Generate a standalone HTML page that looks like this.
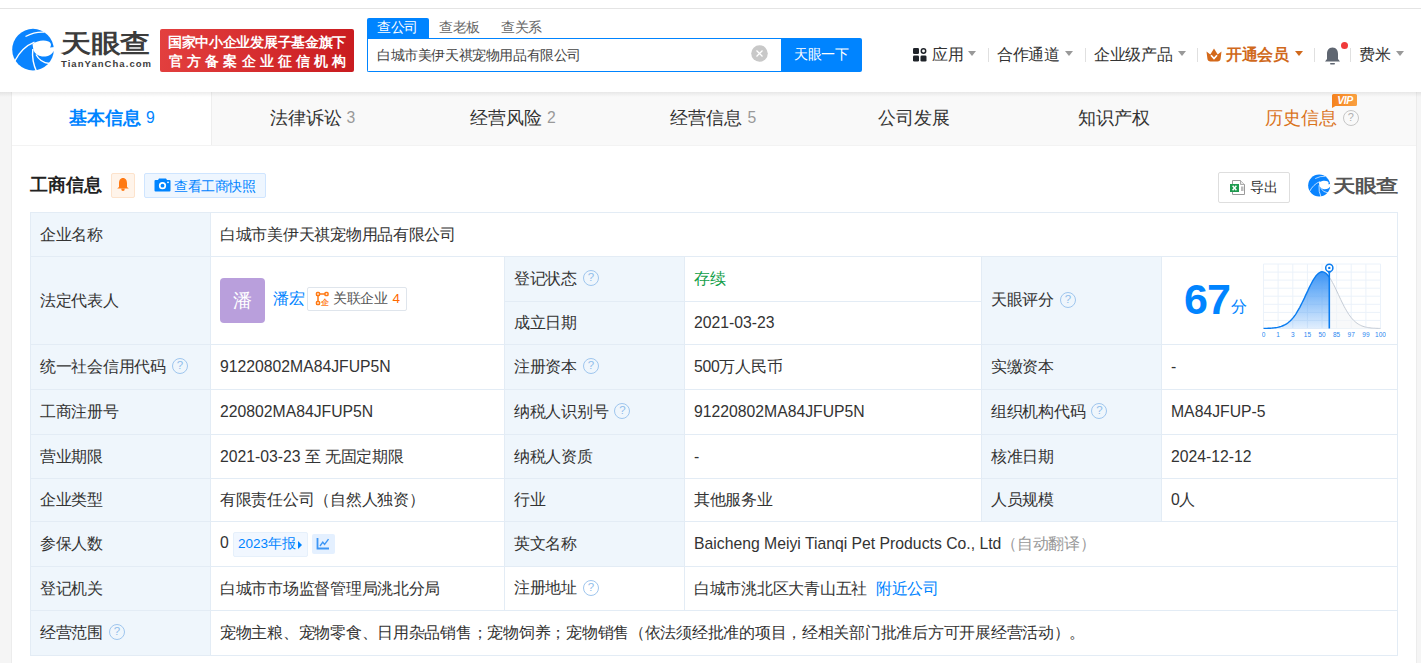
<!DOCTYPE html>
<html><head><meta charset="utf-8">
<style>
html,body{margin:0;padding:0;}
body{width:1421px;height:663px;overflow:hidden;background:#f5f5f5;font-family:"Liberation Sans", sans-serif;position:relative;}
.t{position:absolute;display:flex;align-items:center;white-space:nowrap;line-height:1;}
.qm{display:inline-block;box-sizing:border-box;width:16px;height:16px;border:1.4px solid #9fc6ee;border-radius:50%;margin-left:6px;position:relative;vertical-align:middle;top:-1px;letter-spacing:0}
.qm::after{content:"?";position:absolute;left:0;right:0;top:0;bottom:0;text-align:center;font-size:11.5px;line-height:13.5px;color:#8fbdeb;}
.lat{letter-spacing:0 !important}
</style></head><body>

<div style="position:absolute;left:0px;top:0px;width:1421px;height:8px;background:#fff;"></div>
<div style="position:absolute;left:0px;top:8px;width:1421px;height:1px;background:#e4e4e4;"></div>
<div style="position:absolute;left:0px;top:9px;width:1421px;height:83px;background:#fff;"></div>
<div style="position:absolute;left:0;top:92px;width:1421px;height:5px;background:linear-gradient(rgba(0,0,0,0.07),rgba(0,0,0,0));z-index:5"></div>
<svg style="position:absolute;left:10px;top:26px" width="48" height="48" viewBox="0 0 48 48"><circle cx="23" cy="23.6" r="20.8" fill="#0a84ff"/>
<path d="M22.5 18 C27 14.5 34 13.5 38.5 15.5 C41.5 17 41.5 19.5 40 21.5 L45 21 L45 23 C42 29.5 37 31 32 30.5 C28 30 25 27.5 23.5 24.5 Z" fill="#fff"/>
<path d="M15.5 10.5 Q25 5.5 34.5 6.2" stroke="#fff" stroke-width="1.3" fill="none"/>
<path d="M4.5 35.5 Q12 21 24.5 16.2" stroke="#fff" stroke-width="1.4" fill="none"/>
<path d="M22.8 23 Q21.5 35 26.8 46" stroke="#fff" stroke-width="1.4" fill="none"/>
<path d="M26 28.5 Q30 36.5 39.5 37.5" stroke="#fff" stroke-width="1.4" fill="none"/></svg>
<div class="t" style="left:61px;top:31px;height:30px;font-size:30px;color:#3c3c3c;letter-spacing:0px;font-weight:900;letter-spacing:-0.5px;transform:scaleY(0.83);transform-origin:0 0;"><span>天眼查</span></div>
<div class="t" style="left:61px;top:58px;height:12px;font-size:9.5px;color:#3c3c3c;letter-spacing:0px;font-weight:700;letter-spacing:1.05px;"><span>TianYanCha.com</span></div>
<div style="position:absolute;left:160px;top:29px;width:194px;height:43px;border-radius:2px;background:linear-gradient(100deg,#e3403f,#c91b1f);"></div>
<div class="t" style="left:168px;top:33.5px;height:18px;font-size:13.5px;color:#fff;letter-spacing:-0.4px;font-weight:700;letter-spacing:-0.31px;"><span>国家中小企业发展子基金旗下</span></div>
<div class="t" style="left:169px;top:53px;height:18px;font-size:13.5px;color:#fff;letter-spacing:-0.4px;font-weight:700;letter-spacing:4.15px;"><span>官方备案企业征信机构</span></div>
<div style="position:absolute;left:367px;top:18px;width:62px;height:20px;background:#0084ff;border-radius:2px 2px 0 0"></div>
<div class="t" style="left:377px;top:18px;height:20px;font-size:13.5px;color:#fff;letter-spacing:-0.4px;"><span>查公司</span></div>
<div class="t" style="left:439px;top:18px;height:20px;font-size:13.5px;color:#666;letter-spacing:-0.4px;"><span>查老板</span></div>
<div class="t" style="left:501px;top:18px;height:20px;font-size:13.5px;color:#666;letter-spacing:-0.4px;"><span>查关系</span></div>
<div style="position:absolute;left:367px;top:38px;width:414px;height:34px;box-sizing:border-box;border:1px solid #0084ff;border-right:none;border-radius:0 0 0 2px;background:#fff"></div>
<div class="t" style="left:377px;top:39px;height:34px;font-size:13.5px;color:#444;letter-spacing:-0.4px;"><span>白城市美伊天祺宠物用品有限公司</span></div>
<svg style="position:absolute;left:751px;top:45px" width="17" height="17" viewBox="0 0 17 17"><circle cx="8.5" cy="8.5" r="8.3" fill="#c8c8c8"/><path d="M5.5 5.5L11.5 11.5M11.5 5.5L5.5 11.5" stroke="#fff" stroke-width="1.3"/></svg>
<div style="position:absolute;left:781px;top:38px;width:81px;height:34px;background:#0084ff;border-radius:0 2px 2px 0"></div>
<div class="t" style="left:794px;top:38px;height:34px;font-size:13.5px;color:#fff;letter-spacing:-0.4px;"><span>天眼一下</span></div>
<svg style="position:absolute;left:913px;top:48px" width="14" height="14" viewBox="0 0 14 14">
<rect x="0" y="0" width="6" height="6" rx="1.3" fill="#1f2329"/><circle cx="10.5" cy="3" r="2.2" stroke="#1f2329" stroke-width="1.5" fill="none"/>
<rect x="0" y="7.5" width="6" height="6" rx="1.3" fill="#1f2329"/><rect x="7.5" y="7.5" width="6" height="6" rx="1.3" fill="#1f2329"/></svg>
<div class="t" style="left:932px;top:40px;height:30px;font-size:15.75px;color:#333;letter-spacing:-0.27px;"><span>应用</span></div>
<div style="position:absolute;left:968px;top:51px;width:0;height:0;border-left:4.5px solid transparent;border-right:4.5px solid transparent;border-top:5px solid #999"></div>
<div style="position:absolute;left:988px;top:48px;width:1px;height:14px;background:#e0e0e0;"></div>
<div class="t" style="left:997px;top:40px;height:30px;font-size:15.75px;color:#333;letter-spacing:-0.27px;"><span>合作通道</span></div>
<div style="position:absolute;left:1065px;top:51px;width:0;height:0;border-left:4.5px solid transparent;border-right:4.5px solid transparent;border-top:5px solid #999"></div>
<div style="position:absolute;left:1085px;top:48px;width:1px;height:14px;background:#e0e0e0;"></div>
<div class="t" style="left:1094px;top:40px;height:30px;font-size:15.75px;color:#333;letter-spacing:-0.27px;"><span>企业级产品</span></div>
<div style="position:absolute;left:1178px;top:51px;width:0;height:0;border-left:4.5px solid transparent;border-right:4.5px solid transparent;border-top:5px solid #999"></div>
<div style="position:absolute;left:1197px;top:48px;width:1px;height:14px;background:#e0e0e0;"></div>
<svg style="position:absolute;left:1206px;top:48px" width="16" height="14" viewBox="0 0 16 14">
<path d="M0.5 3.5 L4.3 6.5 L8 0.5 L11.7 6.5 L15.5 3.5 L14.6 10.8 Q14.2 13.5 11.5 13.5 H4.5 Q1.8 13.5 1.4 10.8 Z" fill="#d4691a"/><path d="M5 7.3 L8 10.6 L11 7.3" stroke="#fff" stroke-width="1.7" fill="none"/></svg>
<div class="t" style="left:1226px;top:40px;height:30px;font-size:15.75px;color:#d0691c;letter-spacing:-0.27px;font-weight:700;"><span>开通会员</span></div>
<div style="position:absolute;left:1295px;top:51px;width:0;height:0;border-left:4.5px solid transparent;border-right:4.5px solid transparent;border-top:5px solid #d0691c"></div>
<div style="position:absolute;left:1314px;top:48px;width:1px;height:14px;background:#e0e0e0;"></div>
<svg style="position:absolute;left:1324px;top:46px" width="17" height="20" viewBox="0 0 17 20">
<path d="M8.5 1.5 C4.5 1.5 3 4.5 3 8 L3 13 L1 15.5 L16 15.5 L14 13 L14 8 C14 4.5 12.5 1.5 8.5 1.5Z" fill="#5f6671"/><rect x="6" y="17" width="5" height="1.6" rx="0.8" fill="#5f6671"/></svg>
<div style="position:absolute;left:1341px;top:42px;width:7px;height:7px;border-radius:50%;background:#f03a3a"></div>
<div style="position:absolute;left:1350px;top:48px;width:1px;height:14px;background:#e0e0e0;"></div>
<div class="t" style="left:1359px;top:40px;height:30px;font-size:15.75px;color:#333;letter-spacing:-0.27px;"><span>费米</span></div>
<div style="position:absolute;left:1396px;top:51px;width:0;height:0;border-left:4.5px solid transparent;border-right:4.5px solid transparent;border-top:5px solid #999"></div>
<div style="position:absolute;left:11px;top:92px;width:1406px;height:571px;background:#ececec;"></div>
<div style="position:absolute;left:12px;top:92px;width:1404px;height:571px;background:#fff;"></div>
<div style="position:absolute;left:12px;top:92px;width:1404px;height:53px;background:#f9f9f9;"></div>
<div style="position:absolute;left:12px;top:92px;width:199px;height:53px;background:#fff;"></div>
<div style="position:absolute;left:12px;top:145px;width:1404px;height:1px;background:#f3f3f3;"></div>
<div style="position:absolute;left:211px;top:92px;width:1px;height:53px;background:#eeeeee;"></div>
<div class="t" style="left:12.0px;top:91px;width:200px;height:53px;justify-content:center;font-size:18px;color:#0084ff;font-weight:700;">基本信息<span style="font-size:15.75px;color:#0084ff;margin-left:5px;font-weight:400">9</span></div>
<div class="t" style="left:212.4px;top:91px;width:200px;height:53px;justify-content:center;font-size:18px;color:#333;">法律诉讼<span style="font-size:15.75px;color:#999;margin-left:5px;font-weight:400">3</span></div>
<div class="t" style="left:412.9px;top:91px;width:200px;height:53px;justify-content:center;font-size:18px;color:#333;">经营风险<span style="font-size:15.75px;color:#999;margin-left:5px;font-weight:400">2</span></div>
<div class="t" style="left:613.3px;top:91px;width:200px;height:53px;justify-content:center;font-size:18px;color:#333;">经营信息<span style="font-size:15.75px;color:#999;margin-left:5px;font-weight:400">5</span></div>
<div class="t" style="left:813.7px;top:91px;width:200px;height:53px;justify-content:center;font-size:18px;color:#333;">公司发展</div>
<div class="t" style="left:1014.2px;top:91px;width:200px;height:53px;justify-content:center;font-size:18px;color:#333;">知识产权</div>
<div class="t" style="left:1212.1px;top:91px;width:200px;height:53px;justify-content:center;font-size:18px;color:#d9731c;">历史信息<span style="display:inline-block;box-sizing:border-box;width:16px;height:16px;border:1.3px solid #c6c6c6;border-radius:50%;margin-left:5.5px;font-size:11px;line-height:13px;text-align:center;color:#b0b0b0;">?</span></div>
<svg style="position:absolute;left:1332px;top:94px;z-index:6" width="25" height="14" viewBox="0 0 25 14">
<defs><linearGradient id="vg" x1="0" x2="1"><stop offset="0" stop-color="#f5821f"/><stop offset="1" stop-color="#f9a040"/></linearGradient></defs>
<path d="M1.5 0 H23.5 Q25 0 25 1.5 V10.5 Q25 12 23.5 12 H3.5 L0 14 V1.5 Q0 0 1.5 0Z" fill="url(#vg)"/>
<text x="13" y="10" font-size="10.5" font-style="italic" font-weight="700" fill="#fff" text-anchor="middle" letter-spacing="-0.4" font-family="Liberation Sans">VIP</text></svg>
<div class="t" style="left:30px;top:172px;height:26px;font-size:18px;color:#222;letter-spacing:0px;font-weight:700;"><span>工商信息</span></div>
<div style="position:absolute;left:111px;top:173px;width:24px;height:25px;box-sizing:border-box;border:1px solid #fde3cc;background:#fff4ea;border-radius:2px"></div>
<svg style="position:absolute;left:116px;top:177px" width="14" height="15" viewBox="0 0 14 15"><path d="M7 1 C4.3 1 3 3.3 3 6.3 L3 10 L1.2 11.6 L12.8 11.6 L11 10 L11 6.3 C11 3.3 9.7 1 7 1Z" fill="#ff7a14"/><path d="M5.2 11.5 H8.8 Q8.8 14 7 14 Q5.2 14 5.2 11.5Z" fill="#ff7a14"/></svg>
<div style="position:absolute;left:144px;top:173px;width:122px;height:25px;box-sizing:border-box;border:1px solid #cfe5ff;background:#eef6ff;border-radius:2px"></div>
<svg style="position:absolute;left:154px;top:177px" width="17" height="15" viewBox="0 0 17 15"><path d="M5 1.5 L12 1.5 L13 3 L15.5 3 Q16.5 3 16.5 4 V13.5 Q16.5 14.5 15.5 14.5 H1.5 Q0.5 14.5 0.5 13.5 V4 Q0.5 3 1.5 3 H4Z" fill="#0084ff"/><circle cx="8.5" cy="8.7" r="3.6" fill="#fff"/><circle cx="8.5" cy="8.7" r="1.9" fill="#0084ff"/><circle cx="14" cy="5.3" r="0.9" fill="#fff"/></svg>
<div class="t" style="left:174px;top:174px;height:25px;font-size:13.5px;color:#0084ff;letter-spacing:-0.4px;"><span>查看工商快照</span></div>
<div style="position:absolute;left:1218px;top:172px;width:72px;height:31px;box-sizing:border-box;border:1px solid #dedede;background:#fff;border-radius:2px"></div>
<svg style="position:absolute;left:1229px;top:179px" width="17" height="17" viewBox="0 0 17 17"><path d="M3.5 1.5 H11.5 L15.5 5.5 V15.5 H3.5Z" fill="#fff" stroke="#9a9a9a" stroke-width="1"/><path d="M11.5 1.5 V5.5 H15.5" fill="#e8e8e8" stroke="#9a9a9a" stroke-width="0.8"/><rect x="12" y="7.5" width="2.5" height="4.5" fill="#bbb"/><rect x="1" y="5" width="9" height="8" fill="#1e9b4f"/><path d="M3.6 6.8 L7.4 11.2 M7.4 6.8 L3.6 11.2" stroke="#fff" stroke-width="1.4"/></svg>
<div class="t" style="left:1250px;top:172px;height:31px;font-size:13.5px;color:#333;letter-spacing:-0.4px;"><span>导出</span></div>
<svg style="position:absolute;left:1306.7px;top:172.9px" width="25.4" height="25.4" viewBox="0 0 48 48"><circle cx="23" cy="23.6" r="20.8" fill="#0a84ff"/>
<path d="M22.5 18 C27 14.5 34 13.5 38.5 15.5 C41.5 17 41.5 19.5 40 21.5 L45 21 L45 23 C42 29.5 37 31 32 30.5 C28 30 25 27.5 23.5 24.5 Z" fill="#fff"/>
<path d="M15.5 10.5 Q25 5.5 34.5 6.2" stroke="#fff" stroke-width="1.3" fill="none"/>
<path d="M4.5 35.5 Q12 21 24.5 16.2" stroke="#fff" stroke-width="1.4" fill="none"/>
<path d="M22.8 23 Q21.5 35 26.8 46" stroke="#fff" stroke-width="1.4" fill="none"/>
<path d="M26 28.5 Q30 36.5 39.5 37.5" stroke="#fff" stroke-width="1.4" fill="none"/></svg>
<div class="t" style="left:1333px;top:175px;height:28px;font-size:22px;color:#555;letter-spacing:0px;font-weight:700;letter-spacing:-0.3px;transform:scaleY(0.8);transform-origin:0 0;"><span>天眼查</span></div>
<div style="position:absolute;left:30px;top:212px;width:1368px;height:444px;background:#e3ecf5;"></div>
<div style="position:absolute;left:31px;top:213px;width:1366px;height:442px;background:#fff;"></div>
<div style="position:absolute;left:31px;top:213px;width:179px;height:442px;background:#eff6fc;"></div>
<div style="position:absolute;left:505px;top:257px;width:179px;height:309px;background:#eff6fc;"></div>
<div style="position:absolute;left:982px;top:257px;width:179px;height:264px;background:#eff6fc;"></div>
<div style="position:absolute;left:30px;top:256px;width:1368px;height:1px;background:#e3ecf5;"></div>
<div style="position:absolute;left:30px;top:301px;width:1368px;height:1px;background:#e3ecf5;"></div>
<div style="position:absolute;left:30px;top:344px;width:1368px;height:1px;background:#e3ecf5;"></div>
<div style="position:absolute;left:30px;top:389px;width:1368px;height:1px;background:#e3ecf5;"></div>
<div style="position:absolute;left:30px;top:434px;width:1368px;height:1px;background:#e3ecf5;"></div>
<div style="position:absolute;left:30px;top:478px;width:1368px;height:1px;background:#e3ecf5;"></div>
<div style="position:absolute;left:30px;top:521px;width:1368px;height:1px;background:#e3ecf5;"></div>
<div style="position:absolute;left:30px;top:566px;width:1368px;height:1px;background:#e3ecf5;"></div>
<div style="position:absolute;left:30px;top:610px;width:1368px;height:1px;background:#e3ecf5;"></div>
<div style="position:absolute;left:31px;top:301px;width:179px;height:1px;background:#eff6fc;"></div>
<div style="position:absolute;left:211px;top:301px;width:293px;height:1px;background:#fff;"></div>
<div style="position:absolute;left:982px;top:301px;width:179px;height:1px;background:#eff6fc;"></div>
<div style="position:absolute;left:1162px;top:301px;width:235px;height:1px;background:#fff;"></div>
<div style="position:absolute;left:210px;top:212px;width:1px;height:444px;background:#e3ecf5;"></div>
<div style="position:absolute;left:504px;top:256px;width:1px;height:355px;background:#e3ecf5;"></div>
<div style="position:absolute;left:684px;top:256px;width:1px;height:355px;background:#e3ecf5;"></div>
<div style="position:absolute;left:981px;top:256px;width:1px;height:266px;background:#e3ecf5;"></div>
<div style="position:absolute;left:1161px;top:256px;width:1px;height:266px;background:#e3ecf5;"></div>
<div class="t" style="left:40px;top:213px;height:43px;font-size:15.75px;color:#333;letter-spacing:-0.27px;"><span>企业名称</span></div>
<div class="t" style="left:220px;top:213px;height:43px;font-size:15.75px;color:#333;letter-spacing:-0.27px;"><span>白城市美伊天祺宠物用品有限公司</span></div>
<div class="t" style="left:40px;top:257px;height:87px;font-size:15.75px;color:#333;letter-spacing:-0.27px;"><span>法定代表人</span></div>
<div class="t" style="left:514px;top:257px;height:44px;font-size:15.75px;color:#333;letter-spacing:-0.27px;"><span>登记状态<span class="qm"></span></span></div>
<div class="t" style="left:694px;top:257px;height:44px;font-size:15.75px;color:#15a04a;letter-spacing:-0.27px;"><span>存续</span></div>
<div class="t" style="left:514px;top:302px;height:42px;font-size:15.75px;color:#333;letter-spacing:-0.27px;"><span>成立日期</span></div>
<div class="t" style="left:694px;top:302px;height:42px;font-size:15.75px;color:#333;letter-spacing:-0.27px;letter-spacing:0;"><span>2021-03-23</span></div>
<div class="t" style="left:991px;top:257px;height:87px;font-size:15.75px;color:#333;letter-spacing:-0.27px;"><span>天眼评分<span class="qm"></span></span></div>
<div class="t" style="left:40px;top:345px;height:44px;font-size:15.75px;color:#333;letter-spacing:-0.27px;"><span>统一社会信用代码<span class="qm"></span></span></div>
<div class="t" style="left:220px;top:345px;height:44px;font-size:15.75px;color:#333;letter-spacing:-0.27px;letter-spacing:0;"><span>91220802MA84JFUP5N</span></div>
<div class="t" style="left:514px;top:345px;height:44px;font-size:15.75px;color:#333;letter-spacing:-0.27px;"><span>注册资本<span class="qm"></span></span></div>
<div class="t" style="left:694px;top:345px;height:44px;font-size:15.75px;color:#333;letter-spacing:-0.27px;"><span>500万人民币</span></div>
<div class="t" style="left:991px;top:345px;height:44px;font-size:15.75px;color:#333;letter-spacing:-0.27px;"><span>实缴资本</span></div>
<div class="t" style="left:1171px;top:345px;height:44px;font-size:15.75px;color:#333;letter-spacing:-0.27px;"><span>-</span></div>
<div class="t" style="left:40px;top:390px;height:44px;font-size:15.75px;color:#333;letter-spacing:-0.27px;"><span>工商注册号</span></div>
<div class="t" style="left:220px;top:390px;height:44px;font-size:15.75px;color:#333;letter-spacing:-0.27px;letter-spacing:0;"><span>220802MA84JFUP5N</span></div>
<div class="t" style="left:514px;top:390px;height:44px;font-size:15.75px;color:#333;letter-spacing:-0.27px;"><span>纳税人识别号<span class="qm"></span></span></div>
<div class="t" style="left:694px;top:390px;height:44px;font-size:15.75px;color:#333;letter-spacing:-0.27px;letter-spacing:0;"><span>91220802MA84JFUP5N</span></div>
<div class="t" style="left:991px;top:390px;height:44px;font-size:15.75px;color:#333;letter-spacing:-0.27px;"><span>组织机构代码<span class="qm"></span></span></div>
<div class="t" style="left:1171px;top:390px;height:44px;font-size:15.75px;color:#333;letter-spacing:-0.27px;letter-spacing:0;"><span>MA84JFUP-5</span></div>
<div class="t" style="left:40px;top:435px;height:43px;font-size:15.75px;color:#333;letter-spacing:-0.27px;"><span>营业期限</span></div>
<div class="t" style="left:220px;top:435px;height:43px;font-size:15.75px;color:#333;letter-spacing:-0.27px;"><span><span style="letter-spacing:0">2021-03-23 </span>至 无固定期限</span></div>
<div class="t" style="left:514px;top:435px;height:43px;font-size:15.75px;color:#333;letter-spacing:-0.27px;"><span>纳税人资质</span></div>
<div class="t" style="left:694px;top:435px;height:43px;font-size:15.75px;color:#333;letter-spacing:-0.27px;"><span>-</span></div>
<div class="t" style="left:991px;top:435px;height:43px;font-size:15.75px;color:#333;letter-spacing:-0.27px;"><span>核准日期</span></div>
<div class="t" style="left:1171px;top:435px;height:43px;font-size:15.75px;color:#333;letter-spacing:-0.27px;letter-spacing:0;"><span>2024-12-12</span></div>
<div class="t" style="left:40px;top:479px;height:42px;font-size:15.75px;color:#333;letter-spacing:-0.27px;"><span>企业类型</span></div>
<div class="t" style="left:220px;top:479px;height:42px;font-size:15.75px;color:#333;letter-spacing:-0.27px;"><span>有限责任公司（自然人独资）</span></div>
<div class="t" style="left:514px;top:479px;height:42px;font-size:15.75px;color:#333;letter-spacing:-0.27px;"><span>行业</span></div>
<div class="t" style="left:694px;top:479px;height:42px;font-size:15.75px;color:#333;letter-spacing:-0.27px;"><span>其他服务业</span></div>
<div class="t" style="left:991px;top:479px;height:42px;font-size:15.75px;color:#333;letter-spacing:-0.27px;"><span>人员规模</span></div>
<div class="t" style="left:1171px;top:479px;height:42px;font-size:15.75px;color:#333;letter-spacing:-0.27px;"><span>0人</span></div>
<div class="t" style="left:40px;top:522px;height:44px;font-size:15.75px;color:#333;letter-spacing:-0.27px;"><span>参保人数</span></div>
<div class="t" style="left:220px;top:521px;height:44px;font-size:15.75px;color:#333;letter-spacing:-0.27px;"><span>0</span></div>
<div class="t" style="left:514px;top:522px;height:44px;font-size:15.75px;color:#333;letter-spacing:-0.27px;"><span>英文名称</span></div>
<div class="t" style="left:694px;top:522px;height:44px;font-size:15.75px;color:#333;letter-spacing:-0.27px;letter-spacing:0;"><span>Baicheng Meiyi Tianqi Pet Products Co., Ltd<span style="color:#999;margin-left:0px;letter-spacing:-0.27px">（自动翻译）</span></span></div>
<div class="t" style="left:40px;top:567px;height:43px;font-size:15.75px;color:#333;letter-spacing:-0.27px;"><span>登记机关</span></div>
<div class="t" style="left:220px;top:567px;height:43px;font-size:15.75px;color:#333;letter-spacing:-0.27px;"><span>白城市市场监督管理局洮北分局</span></div>
<div class="t" style="left:514px;top:567px;height:43px;font-size:15.75px;color:#333;letter-spacing:-0.27px;"><span>注册地址<span class="qm"></span></span></div>
<div class="t" style="left:694px;top:567px;height:43px;font-size:15.75px;color:#333;letter-spacing:-0.27px;"><span>白城市洮北区大青山五社<span style="color:#0084ff;margin-left:9px">附近公司</span></span></div>
<div class="t" style="left:40px;top:611px;height:44px;font-size:15.75px;color:#333;letter-spacing:-0.27px;"><span>经营范围<span class="qm"></span></span></div>
<div class="t" style="left:220px;top:611px;height:44px;font-size:15.75px;color:#333;letter-spacing:-0.27px;"><span>宠物主粮、宠物零食、日用杂品销售；宠物饲养；宠物销售（依法须经批准的项目，经相关部门批准后方可开展经营活动）。</span></div>
<div style="position:absolute;left:220px;top:278px;width:45px;height:45px;border-radius:4px;background:#b99fdc"></div>
<div class="t" style="left:220px;top:278px;height:45px;font-size:19px;color:#fff;letter-spacing:0px;width:45px;justify-content:center;"><span>潘</span></div>
<div class="t" style="left:273px;top:279px;height:40px;font-size:15.75px;color:#0084ff;letter-spacing:-0.27px;"><span>潘宏</span></div>
<div style="position:absolute;left:307px;top:287px;width:100px;height:24px;box-sizing:border-box;border:1px solid #dfe5ec;border-radius:2px;background:#fff"></div>
<svg style="position:absolute;left:315px;top:291px" width="15" height="15" viewBox="0 0 15 15"><g fill="none" stroke="#ff7a14" stroke-width="1.5"><rect x="1.5" y="1.5" width="3" height="3" rx="0.8"/><rect x="10" y="1.5" width="3" height="3" rx="0.8"/><rect x="1.5" y="10.5" width="3" height="3" rx="0.8"/><path d="M4.5 3H10M3 4.5V10.5"/></g><text x="10.3" y="14.3" font-size="7.5" font-weight="700" fill="#ff7a14" text-anchor="middle">企</text></svg>
<div class="t" style="left:333px;top:287px;height:24px;font-size:13.5px;color:#555;letter-spacing:-0.4px;"><span>关联企业<span style="color:#ff6a00;margin-left:5px">4</span></span></div>
<div style="position:absolute;left:233px;top:532px;width:75px;height:25px;box-sizing:border-box;border:1px solid #e6f0fb;border-radius:2px;background:#f1f7ff"></div>
<div class="t" style="left:238px;top:531px;height:25px;font-size:13.5px;color:#0084ff;letter-spacing:-0.4px;letter-spacing:0;"><span>2023年报</span></div>
<div style="position:absolute;left:298px;top:541px;width:0;height:0;border-top:4px solid transparent;border-bottom:4px solid transparent;border-left:4.5px solid #0084ff"></div>
<div style="position:absolute;left:312px;top:534px;width:23px;height:20px;border-radius:2px;background:#e4f0ff"></div>
<svg style="position:absolute;left:316px;top:537px" width="14" height="13" viewBox="0 0 14 13"><path d="M1.5 1V11.5H13" stroke="#3d96f5" stroke-width="1.8" fill="none"/><path d="M4 9L6.8 5.2L8.6 7.4L12.5 2.2" stroke="#3d96f5" stroke-width="1.4" fill="none"/></svg>
<div class="t" style="left:1184px;top:277px;height:44px;font-size:43px;color:#0084ff;letter-spacing:0px;font-weight:700;letter-spacing:-1px;"><span>67</span></div>
<div class="t" style="left:1231px;top:295px;height:24px;font-size:15.75px;color:#0084ff;letter-spacing:-0.27px;"><span>分</span></div>
<svg style="position:absolute;left:1262px;top:262px" width="124" height="80" viewBox="0 0 124 80"><defs><linearGradient id="sg" x1="0" y1="0" x2="0" y2="1"><stop offset="0" stop-color="#3b94f5"/><stop offset="1" stop-color="#3b94f5" stop-opacity="0.15"/></linearGradient></defs><line x1="1.5" y1="2" x2="1.5" y2="66.5" stroke="#ebf2fa" stroke-width="1"/><line x1="16.1" y1="2" x2="16.1" y2="66.5" stroke="#ebf2fa" stroke-width="1"/><line x1="30.8" y1="2" x2="30.8" y2="66.5" stroke="#ebf2fa" stroke-width="1"/><line x1="45.4" y1="2" x2="45.4" y2="66.5" stroke="#ebf2fa" stroke-width="1"/><line x1="60.0" y1="2" x2="60.0" y2="66.5" stroke="#ebf2fa" stroke-width="1"/><line x1="74.6" y1="2" x2="74.6" y2="66.5" stroke="#ebf2fa" stroke-width="1"/><line x1="89.2" y1="2" x2="89.2" y2="66.5" stroke="#ebf2fa" stroke-width="1"/><line x1="103.9" y1="2" x2="103.9" y2="66.5" stroke="#ebf2fa" stroke-width="1"/><line x1="118.5" y1="2" x2="118.5" y2="66.5" stroke="#ebf2fa" stroke-width="1"/><line x1="1.5" y1="2.0" x2="118.5" y2="2.0" stroke="#ebf2fa" stroke-width="1"/><line x1="1.5" y1="10.1" x2="118.5" y2="10.1" stroke="#ebf2fa" stroke-width="1"/><line x1="1.5" y1="18.1" x2="118.5" y2="18.1" stroke="#ebf2fa" stroke-width="1"/><line x1="1.5" y1="26.2" x2="118.5" y2="26.2" stroke="#ebf2fa" stroke-width="1"/><line x1="1.5" y1="34.2" x2="118.5" y2="34.2" stroke="#ebf2fa" stroke-width="1"/><line x1="1.5" y1="42.3" x2="118.5" y2="42.3" stroke="#ebf2fa" stroke-width="1"/><line x1="1.5" y1="50.4" x2="118.5" y2="50.4" stroke="#ebf2fa" stroke-width="1"/><line x1="1.5" y1="58.4" x2="118.5" y2="58.4" stroke="#ebf2fa" stroke-width="1"/><line x1="1.5" y1="66.5" x2="118.5" y2="66.5" stroke="#ebf2fa" stroke-width="1"/><path d="M1.5 66.4 L2.7 66.4 L3.8 66.4 L5.0 66.4 L6.2 66.3 L7.3 66.3 L8.5 66.2 L9.7 66.1 L10.9 66.0 L12.0 65.9 L13.2 65.7 L14.4 65.6 L15.5 65.4 L16.7 65.1 L17.9 64.8 L19.1 64.4 L20.2 64.0 L21.4 63.5 L22.6 63.0 L23.7 62.3 L24.9 61.6 L26.1 60.7 L27.2 59.7 L28.4 58.7 L29.6 57.5 L30.8 56.1 L31.9 54.7 L33.1 53.1 L34.3 51.3 L35.4 49.4 L36.6 47.4 L37.8 45.3 L38.9 43.1 L40.1 40.8 L41.3 38.4 L42.5 35.9 L43.6 33.4 L44.8 30.9 L46.0 28.4 L47.1 25.9 L48.3 23.5 L49.5 21.2 L50.6 19.1 L51.8 17.1 L53.0 15.3 L54.1 13.7 L55.3 12.4 L56.5 11.3 L57.7 10.5 L58.8 10.0 L60.0 9.8 L61.2 9.9 L62.3 10.3 L63.5 11.0 L64.7 12.0 L65.8 13.2 L67.0 14.7 L67.3 15.1 L67.3 66.5 L1.5 66.5Z" fill="url(#sg)"/><path d="M1.5 66.4 L2.7 66.4 L3.8 66.4 L5.0 66.4 L6.2 66.3 L7.3 66.3 L8.5 66.2 L9.7 66.1 L10.9 66.0 L12.0 65.9 L13.2 65.7 L14.4 65.6 L15.5 65.4 L16.7 65.1 L17.9 64.8 L19.1 64.4 L20.2 64.0 L21.4 63.5 L22.6 63.0 L23.7 62.3 L24.9 61.6 L26.1 60.7 L27.2 59.7 L28.4 58.7 L29.6 57.5 L30.8 56.1 L31.9 54.7 L33.1 53.1 L34.3 51.3 L35.4 49.4 L36.6 47.4 L37.8 45.3 L38.9 43.1 L40.1 40.8 L41.3 38.4 L42.5 35.9 L43.6 33.4 L44.8 30.9 L46.0 28.4 L47.1 25.9 L48.3 23.5 L49.5 21.2 L50.6 19.1 L51.8 17.1 L53.0 15.3 L54.1 13.7 L55.3 12.4 L56.5 11.3 L57.7 10.5 L58.8 10.0 L60.0 9.8 L61.2 9.9 L62.3 10.3 L63.5 11.0 L64.7 12.0 L65.8 13.2 L67.0 14.7 L67.3 15.1" stroke="#0a7cf0" stroke-width="1.4" fill="none"/><path d="M67.3 15.1 L68.2 16.5 L69.4 18.4 L70.5 20.5 L71.7 22.7 L72.9 25.1 L74.0 27.5 L75.2 30.0 L76.4 32.5 L77.5 35.0 L78.7 37.5 L79.9 40.0 L81.1 42.3 L82.2 44.6 L83.4 46.7 L84.6 48.8 L85.7 50.7 L86.9 52.5 L88.1 54.1 L89.2 55.6 L90.4 57.0 L91.6 58.3 L92.8 59.4 L93.9 60.4 L95.1 61.3 L96.3 62.1 L97.4 62.7 L98.6 63.3 L99.8 63.9 L101.0 64.3 L102.1 64.7 L103.3 65.0 L104.5 65.3 L105.6 65.5 L106.8 65.7 L108.0 65.8 L109.1 66.0 L110.3 66.1 L111.5 66.2 L112.7 66.2 L113.8 66.3 L115.0 66.3 L116.2 66.4 L117.3 66.4 L118.5 66.4 L118.5 66.5 L67.3 66.5Z" fill="#f4f5f7" fill-opacity="0.6"/><path d="M67.3 15.1 L68.2 16.5 L69.4 18.4 L70.5 20.5 L71.7 22.7 L72.9 25.1 L74.0 27.5 L75.2 30.0 L76.4 32.5 L77.5 35.0 L78.7 37.5 L79.9 40.0 L81.1 42.3 L82.2 44.6 L83.4 46.7 L84.6 48.8 L85.7 50.7 L86.9 52.5 L88.1 54.1 L89.2 55.6 L90.4 57.0 L91.6 58.3 L92.8 59.4 L93.9 60.4 L95.1 61.3 L96.3 62.1 L97.4 62.7 L98.6 63.3 L99.8 63.9 L101.0 64.3 L102.1 64.7 L103.3 65.0 L104.5 65.3 L105.6 65.5 L106.8 65.7 L108.0 65.8 L109.1 66.0 L110.3 66.1 L111.5 66.2 L112.7 66.2 L113.8 66.3 L115.0 66.3 L116.2 66.4 L117.3 66.4 L118.5 66.4" stroke="#c5ccd6" stroke-width="1" fill="none"/><line x1="67.3" y1="10" x2="67.3" y2="66.5" stroke="#0a7cf0" stroke-width="1.6"/><path d="M64.1 8 L67.3 12 L70.5 8Z" fill="#0a7cf0"/><circle cx="67.3" cy="5.9" r="3.6" fill="#fff" stroke="#0a7cf0" stroke-width="1.5"/><circle cx="67.3" cy="5.9" r="1.2" fill="#0a7cf0"/><text x="1.5" y="74.8" font-size="6.5" fill="#2b86f0" text-anchor="middle" font-family="Liberation Sans">0</text><text x="16.1" y="74.8" font-size="6.5" fill="#2b86f0" text-anchor="middle" font-family="Liberation Sans">1</text><text x="30.8" y="74.8" font-size="6.5" fill="#2b86f0" text-anchor="middle" font-family="Liberation Sans">3</text><text x="45.4" y="74.8" font-size="6.5" fill="#2b86f0" text-anchor="middle" font-family="Liberation Sans">15</text><text x="60.0" y="74.8" font-size="6.5" fill="#2b86f0" text-anchor="middle" font-family="Liberation Sans">50</text><text x="74.6" y="74.8" font-size="6.5" fill="#2b86f0" text-anchor="middle" font-family="Liberation Sans">85</text><text x="89.2" y="74.8" font-size="6.5" fill="#2b86f0" text-anchor="middle" font-family="Liberation Sans">97</text><text x="103.9" y="74.8" font-size="6.5" fill="#2b86f0" text-anchor="middle" font-family="Liberation Sans">99</text><text x="118.5" y="74.8" font-size="6.5" fill="#2b86f0" text-anchor="middle" font-family="Liberation Sans">100</text></svg>
</body></html>
